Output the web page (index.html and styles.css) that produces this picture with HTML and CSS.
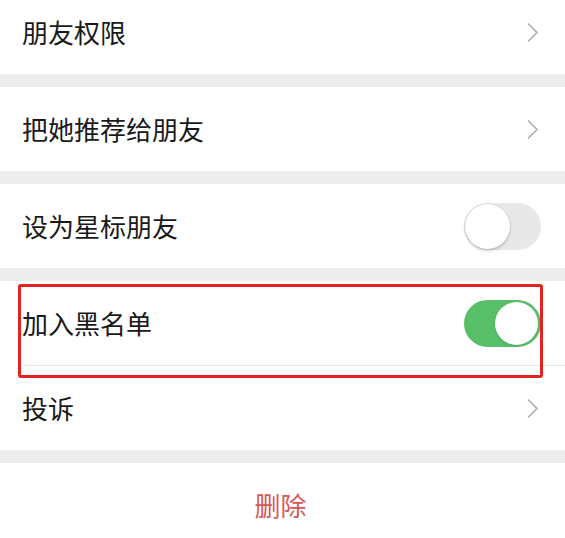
FILE: index.html
```html
<!DOCTYPE html>
<html lang="zh-CN">
<head>
<meta charset="utf-8">
<title>资料设置</title>
<link rel="stylesheet" href="styles.css">
</head>
<body>
<div class="page">
  <div class="group">
    <div class="row">
      <span class="label">朋友权限</span>
      <svg class="chev" width="13" height="21" viewBox="0 0 13 21"><path d="M2 1.5 L11 10.5 L2 19.5" fill="none" stroke="#b0b0b0" stroke-width="1.7"/></svg>
    </div>
  </div>
  <div class="group">
    <div class="row">
      <span class="label">把她推荐给朋友</span>
      <svg class="chev" width="13" height="21" viewBox="0 0 13 21"><path d="M2 1.5 L11 10.5 L2 19.5" fill="none" stroke="#b0b0b0" stroke-width="1.7"/></svg>
    </div>
  </div>
  <div class="group">
    <div class="row">
      <span class="label">设为星标朋友</span>
      <span class="switch"><span class="knob"></span></span>
    </div>
  </div>
  <div class="group marked">
    <div class="row sep">
      <span class="label">加入黑名单</span>
      <span class="switch on"><span class="knob"></span></span>
    </div>
    <div class="row">
      <span class="label">投诉</span>
      <svg class="chev" width="13" height="21" viewBox="0 0 13 21"><path d="M2 1.5 L11 10.5 L2 19.5" fill="none" stroke="#b0b0b0" stroke-width="1.7"/></svg>
    </div>
    <div class="highlight"></div>
  </div>
  <div class="group">
    <div class="row center">
      <span class="danger">删除</span>
    </div>
  </div>
</div>
</body>
</html>
```
FILE: styles.css
```css
html, body {
  margin: 0;
  padding: 0;
  background: #ededed;
}
body {
  font-family: "Noto Sans CJK SC", "Noto Sans", sans-serif;
  overflow: hidden;
}
.page {
  margin-top: -10px;
  display: flex;
  flex-direction: column;
  gap: 13px;
}
.group {
  background: #ffffff;
  position: relative;
}
.row {
  height: 84px;
  display: flex;
  align-items: center;
  justify-content: space-between;
  padding: 0 24px 0 22px;
  box-sizing: border-box;
  position: relative;
}
.row.sep::after {
  content: "";
  position: absolute;
  left: 23px;
  right: 0;
  bottom: -1px;
  height: 1px;
  background: #e6e6e6;
}
.row.sep {
  margin-bottom: 1px;
}
.label {
  font-size: 26px;
  color: #191919;
  line-height: 1;
}
.chev {
  margin-right: 2px;
  display: block;
}
.switch {
  width: 77px;
  height: 47px;
  border-radius: 24px;
  background: #e8e8e9;
  box-sizing: border-box;
  position: relative;
  display: block;
}
.switch .knob {
  position: absolute;
  left: 1px;
  top: 1px;
  width: 45px;
  height: 45px;
  border-radius: 50%;
  background: #ffffff;
  box-shadow: 0 2px 3px rgba(0,0,0,0.18), 0 0 0 1px rgba(0,0,0,0.06);
}
.switch.on {
  background: #58bf69;
}
.switch.on .knob {
  left: 31px;
  top: 2px;
  width: 43px;
  height: 43px;
  box-shadow: 0 1px 2px rgba(0,0,0,0.12);
}
.center {
  justify-content: center;
}
.danger {
  font-size: 26px;
  color: #d65757;
  line-height: 1;
  padding-right: 2px;
}
.highlight {
  position: absolute;
  left: 18px;
  top: 3px;
  width: 525px;
  height: 94px;
  border: 3px solid #e3231f;
  border-radius: 3px;
  box-sizing: border-box;
  pointer-events: none;
}
```
